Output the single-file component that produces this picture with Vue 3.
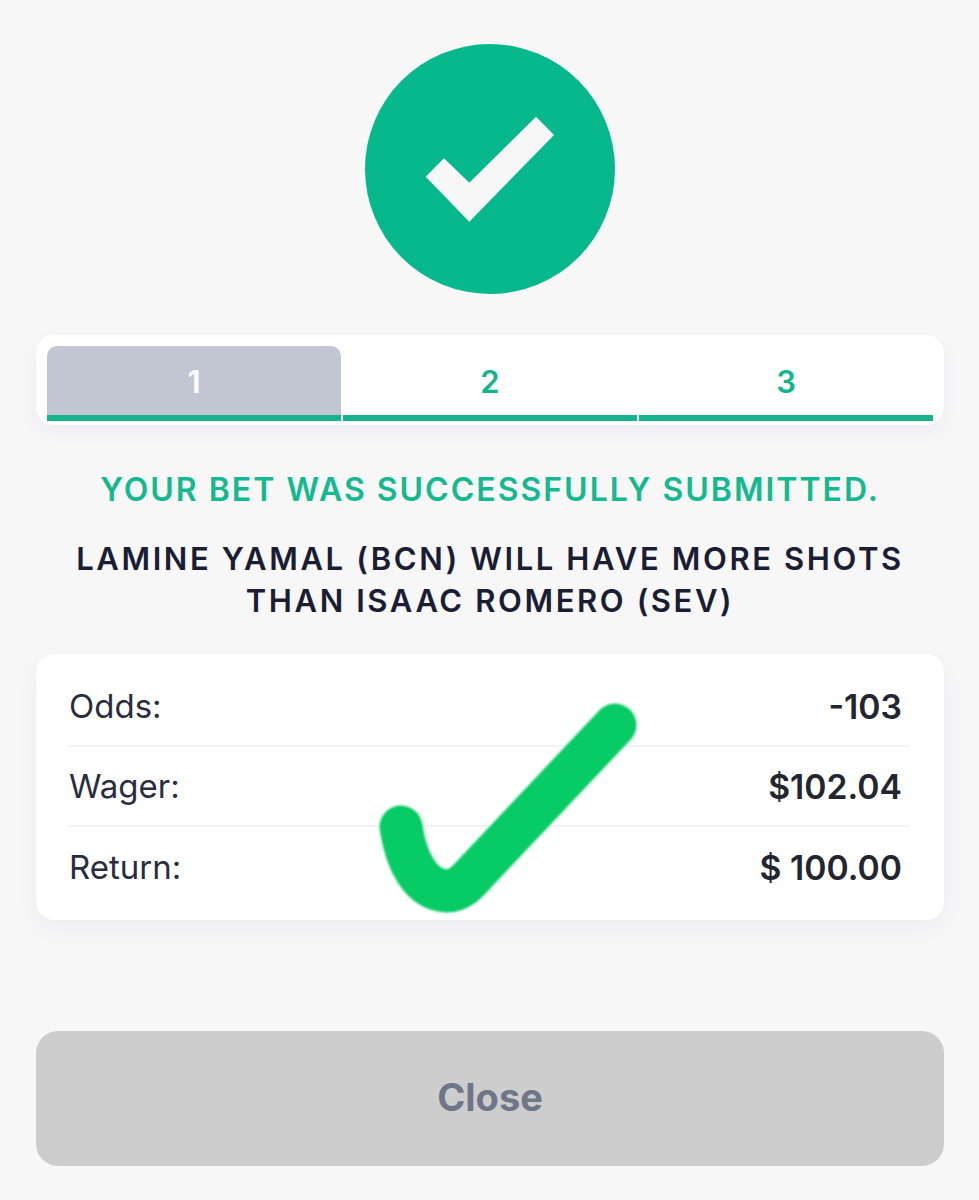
<template>
  <div class="page">
    <svg class="success-icon" viewBox="0 0 250 250">
      <circle cx="125" cy="125" r="125" fill="#08b88d" />
      <polygon points="60.7,132.7 79,114.3 104.3,138.7 171,72.7 189,91 104.3,177.7" fill="#f7f7f8" />
    </svg>

    <div class="tabs">
      <div class="tab" v-for="n in tabs" :key="n" :class="{ active: n === 1 }">{{ n }}</div>
    </div>

    <p class="success-msg">YOUR BET WAS SUCCESSFULLY SUBMITTED.</p>
    <h2 class="bet-title">LAMINE YAMAL (BCN) WILL HAVE MORE SHOTS<br />THAN ISAAC ROMERO (SEV)</h2>

    <div class="details">
      <div class="row" v-for="row in rows" :key="row.label">
        <span class="label">{{ row.label }}</span>
        <span class="value">{{ row.value }}</span>
      </div>
      <svg class="big-check" viewBox="0 0 320 250">
        <path d="M61 147C66 180 80 210 107 211C122 211 130 198 140 188L275 45" fill="none" stroke="#07cb65" stroke-width="43" stroke-linecap="round" stroke-linejoin="round" />
      </svg>
    </div>

    <button class="close-btn">Close</button>
  </div>
</template>

<script setup>
const tabs = [1, 2, 3]

const rows = [
  { label: 'Odds:', value: '-103' },
  { label: 'Wager:', value: '$102.04' },
  { label: 'Return:', value: '$ 100.00' },
]
</script>

<style>
body { background: #f7f7f8; }
</style>

<style scoped>
.page {
  height: 1200px;
  box-sizing: border-box;
  padding: 44px 35px 0 36px;
  background: #f7f7f8;
  font-family: Inter, "Liberation Sans", sans-serif;
  display: flex;
  flex-direction: column;
  overflow: hidden;
}
.success-icon {
  width: 250px;
  height: 250px;
  margin-left: 329px;
  flex: none;
}
.tabs {
  margin-top: 41px;
  height: 90px;
  box-sizing: border-box;
  padding: 11px 11px 4px;
  display: flex;
  gap: 2px;
  background: #fff;
  border-radius: 18px;
  box-shadow: 0 6px 20px rgba(30, 40, 70, 0.05);
}
.tab {
  flex: 1;
  height: 75px;
  box-sizing: border-box;
  border-bottom: 6px solid #14b48c;
  padding-top: 2px;
  display: flex;
  align-items: center;
  justify-content: center;
  color: #14b48c;
  font-size: 31px;
  font-weight: 600;
}
.tab.active {
  background: #c2c6d3;
  color: #fff;
  border-radius: 10px 10px 0 0;
}
.success-msg {
  margin: 47px 0 0;
  text-align: center;
  color: #14b98f;
  font-size: 32px;
  line-height: 36px;
  font-weight: 600;
  letter-spacing: 2px;
}
.bet-title {
  margin: 30px 0 0;
  text-align: center;
  color: #1a1d33;
  font-size: 31px;
  line-height: 42px;
  font-weight: 600;
  letter-spacing: 2.6px;
}
.details {
  position: relative;
  margin-top: 32px;
  padding: 13px 34px 13px 33px;
  background: #fff;
  border-radius: 18px;
  box-shadow: 0 8px 24px rgba(30, 40, 70, 0.05);
}
.row {
  height: 80px;
  display: flex;
  align-items: center;
  justify-content: space-between;
  padding-right: 8px;
  font-size: 33px;
  color: #2a2d3e;
  border-bottom: 2px solid #f3f3f6;
  box-sizing: border-box;
}
.row:last-of-type { border-bottom: none; }
.value {
  font-weight: 600;
  color: #23262f;
  font-size: 33.7px;
}
.big-check {
  position: absolute;
  left: 304px;
  top: 26px;
  width: 320px;
  height: 250px;
  filter: blur(0.8px);
}
.close-btn {
  margin-top: 111px;
  height: 135px;
  border: none;
  border-radius: 22px;
  background: #cdcdcd;
  color: #6f7688;
  font-family: inherit;
  font-size: 38px;
  font-weight: 700;
  padding-bottom: 4px;
}
</style>
